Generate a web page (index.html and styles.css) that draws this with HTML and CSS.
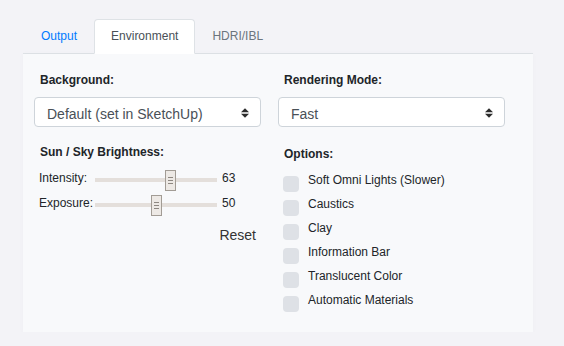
FILE: index.html
```html
<!DOCTYPE html>
<html lang="en">
<head>
    <meta charset="UTF-8">
    <meta name="viewport" content="width=device-width, initial-scale=1.0">
    <title>Environment</title>
    <link rel="stylesheet" href="styles.css">
</head>
<body>
    <div class="container">
        <div class="tabs">
            <a class="tab tab-link" href="#">Output</a>
            <a class="tab tab-active" href="#">Environment</a>
            <a class="tab tab-muted" href="#">HDRI/IBL</a>
        </div>
        <div class="panel">
            <div class="column">
                <label class="field-label">Background:</label>
                <div class="select-wrap">
                    <select class="select">
                        <option>Default (set in SketchUp)</option>
                    </select>
                    <svg class="select-arrow" width="8" height="10" viewBox="0 0 8 10">
                        <path d="M0 4.2 L4 0.2 L8 4.2 Z M0 5.8 L8 5.8 L4 9.8 Z" fill="#2b2b2b"/>
                    </svg>
                </div>
                <label class="field-label section-left">Sun / Sky Brightness:</label>
                <div class="slider-row">
                    <span class="slider-label">Intensity:</span>
                    <input class="slider" type="range" min="0" max="100" value="63">
                    <span class="slider-value">63</span>
                </div>
                <div class="slider-row">
                    <span class="slider-label">Exposure:</span>
                    <input class="slider" type="range" min="0" max="100" value="50">
                    <span class="slider-value">50</span>
                </div>
                <div class="reset-row">
                    <button class="reset">Reset</button>
                </div>
            </div>
            <div class="column">
                <label class="field-label">Rendering Mode:</label>
                <div class="select-wrap">
                    <select class="select">
                        <option>Fast</option>
                    </select>
                    <svg class="select-arrow" width="8" height="10" viewBox="0 0 8 10">
                        <path d="M0 4.2 L4 0.2 L8 4.2 Z M0 5.8 L8 5.8 L4 9.8 Z" fill="#2b2b2b"/>
                    </svg>
                </div>
                <label class="field-label section-right">Options:</label>
                <div class="options">
                    <label class="option"><span class="check"></span>Soft Omni Lights (Slower)</label>
                    <label class="option"><span class="check"></span>Caustics</label>
                    <label class="option"><span class="check"></span>Clay</label>
                    <label class="option"><span class="check"></span>Information Bar</label>
                    <label class="option"><span class="check"></span>Translucent Color</label>
                    <label class="option"><span class="check"></span>Automatic Materials</label>
                </div>
            </div>
        </div>
    </div>
</body>
</html>
```

FILE: styles.css
```css
body {
    font-family: "Liberation Sans", Arial, sans-serif;
    font-size: 12px;
    color: #212529;
    background-color: #f3f3f7;
    margin: 0;
}
.container {
    width: 510px;
    margin: 19px 0 0 23px;
}
.tabs {
    display: flex;
    border-bottom: 1px solid #dee2e6;
    padding-left: 1px;
}
.tab {
    display: block;
    padding: 9px 16px;
    line-height: 15px;
    font-size: 12px;
    text-decoration: none;
    border: 1px solid transparent;
    border-radius: 4px 4px 0 0;
    margin-bottom: -1px;
}
.tab-link {
    color: #007bff;
}
.tab-active {
    color: #495057;
    background-color: #ffffff;
    border-color: #dee2e6 #dee2e6 #ffffff;
}
.tab-muted {
    color: #6c757d;
}
.panel {
    display: grid;
    grid-template-columns: 227px 227px;
    column-gap: 17px;
    padding: 19px 28px 15px 11px;
    background-color: #f8f9fb;
    box-shadow: 0 0 6px rgba(0, 0, 0, 0.025);
}
.column {
    display: flex;
    flex-direction: column;
}
.field-label {
    display: block;
    font-weight: bold;
    line-height: 15px;
    padding-left: 6px;
    margin-bottom: 9px;
}
.section-left {
    margin-top: 18px;
    margin-bottom: 8px;
}
.section-right {
    margin-top: 20px;
    margin-bottom: 11px;
}
.select-wrap {
    position: relative;
}
.select {
    -webkit-appearance: none;
    appearance: none;
    display: block;
    width: 227px;
    height: 30px;
    box-sizing: border-box;
    padding: 4px 30px 0 12px;
    font-family: "Liberation Sans", Arial, sans-serif;
    font-size: 14px;
    color: #495057;
    background-color: #ffffff;
    border: 1px solid #ced4da;
    border-radius: 4px;
}
.select-arrow {
    position: absolute;
    right: 12px;
    top: 11px;
}
.slider-row {
    display: flex;
    align-items: center;
    height: 24px;
    margin-bottom: 1px;
    padding-left: 5px;
}
.slider-label {
    width: 56px;
    line-height: 15px;
    margin-bottom: 3px;
}
.slider-value {
    margin-left: 5px;
    line-height: 15px;
    margin-bottom: 3px;
}
.slider {
    -webkit-appearance: none;
    appearance: none;
    width: 122px;
    height: 21px;
    margin: 0;
    background: transparent;
}
.slider::-webkit-slider-runnable-track {
    height: 4px;
    background-color: #e4dfdb;
    border: none;
}
.slider::-webkit-slider-thumb {
    -webkit-appearance: none;
    appearance: none;
    box-sizing: border-box;
    width: 11px;
    height: 21px;
    margin-top: -8px;
    border: 1px solid #a29c95;
    background:
        linear-gradient(#8d8781, #8d8781) 2px 6px / 5px 1px no-repeat,
        linear-gradient(#8d8781, #8d8781) 2px 9px / 5px 1px no-repeat,
        linear-gradient(#8d8781, #8d8781) 2px 12px / 5px 1px no-repeat,
        #ede9e5;
}
.reset-row {
    display: flex;
    justify-content: flex-end;
    margin-top: 9px;
    padding-right: 5px;
}
.reset {
    font-family: "Liberation Sans", Arial, sans-serif;
    font-size: 14px;
    line-height: 17px;
    color: #333333;
    background: none;
    border: none;
    padding: 0;
}
.options {
    display: flex;
    flex-direction: column;
}
.option {
    display: flex;
    align-items: flex-start;
    height: 24px;
    line-height: 15px;
    padding-left: 5px;
}
.check {
    width: 16px;
    height: 16px;
    margin-top: 3px;
    margin-right: 9px;
    border-radius: 4px;
    background-color: #dee1e6;
}
```
